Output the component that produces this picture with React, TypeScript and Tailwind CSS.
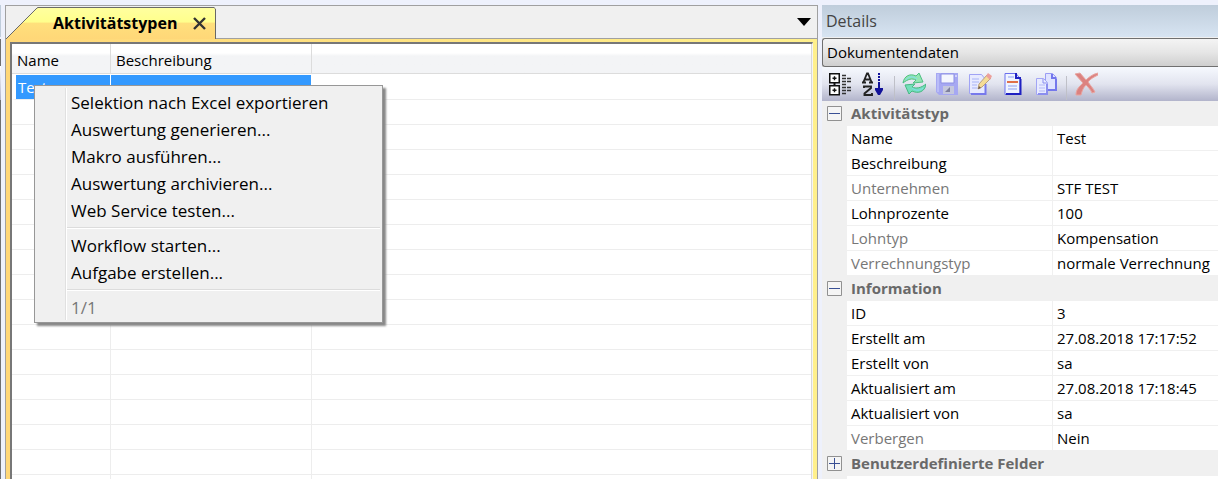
import type { ReactNode } from "react";

type Field = { label: string; value: string; muted?: boolean };
type Group = { title: string; open: boolean; fields: Field[] };

const groups: Group[] = [
  {
    title: "Aktivitätstyp",
    open: true,
    fields: [
      { label: "Name", value: "Test" },
      { label: "Beschreibung", value: "" },
      { label: "Unternehmen", value: "STF TEST", muted: true },
      { label: "Lohnprozente", value: "100" },
      { label: "Lohntyp", value: "Kompensation", muted: true },
      { label: "Verrechnungstyp", value: "normale Verrechnung", muted: true },
    ],
  },
  {
    title: "Information",
    open: true,
    fields: [
      { label: "ID", value: "3" },
      { label: "Erstellt am", value: "27.08.2018 17:17:52" },
      { label: "Erstellt von", value: "sa" },
      { label: "Aktualisiert am", value: "27.08.2018 17:18:45" },
      { label: "Aktualisiert von", value: "sa" },
      { label: "Verbergen", value: "Nein", muted: true },
    ],
  },
  { title: "Benutzerdefinierte Felder", open: false, fields: [] },
];

const menuGroups = [
  [
    "Selektion nach Excel exportieren",
    "Auswertung generieren...",
    "Makro ausführen...",
    "Auswertung archivieren...",
    "Web Service testen...",
  ],
  ["Workflow starten...", "Aufgabe erstellen..."],
];

const emptyRows = Array.from({ length: 16 }, (_, i) => i);

function Tool({ label, children }: { label: string; children: ReactNode }) {
  return (
    <button type="button" aria-label={label} className="flex h-6 w-6 items-center justify-center">
      <svg width="24" height="24" viewBox="0 0 24 24" fill="none">
        {children}
      </svg>
    </button>
  );
}

function Divider() {
  return <div className="mt-2 h-6 w-px bg-[#bfc0c8]" />;
}

function Toolbar() {
  return (
    <div className="flex h-[34px] shrink-0 items-center bg-linear-to-b from-[#f6f9fe] via-[#e2e4ef] to-[#b2b4cb] pl-[6px]">
      <div className="flex gap-[9px] pr-[9px]">
        <Tool label="Kategorisiert">
          <path d="M1.750 1.750h9.500v9h-9.500zM1.750 13.750h9.500v9h-9.500z" fill="#fff" stroke="#111" strokeWidth="1.500" />
          <path d="M6.500 11v3" stroke="#111" strokeWidth="2" />
          <path d="M4.500 6.250h4M6.500 4.250v4M4.500 18.250h4M6.500 16.250v4" stroke="#111" strokeWidth="1.400" />
          <path
            d="M14 3.500h5M14 6.500h9M14 9.500h9M14 12.500h5M14 15.500h9M14 18.500h9M14 21.500h5"
            stroke="#333"
            strokeWidth="1.300"
            strokeDasharray="4 1"
          />
        </Tool>
        <Tool label="Alphabetisch">
          <path d="M2.500 10 6 1.500h1l3.500 8.500M4 7.500h5M1 10.500h4M8 10.500h4" stroke="#222" strokeWidth="1.800" />
          <path d="M3 16v-1.500h7V16l-6.500 5.500V23H11v-2" stroke="#222" strokeWidth="1.900" />
          <path d="M18 1v2M18 4v2M18 7v2M18 10v7" stroke="#11119a" strokeWidth="2" />
          <path d="M14 16h8v2l-3 5h-2l-3-5z" fill="#11119a" />
        </Tool>
      </div>
      <Divider />
      <div className="flex gap-[9px] pr-2 pl-[7px]">
        <Tool label="Aktualisieren">
          <path d="M1 11C2 4 8 1 14 4l3-3 4 9-10 1 3-3C10 6 6 7 1 11z" fill="#92e6b2" stroke="#4fbf83" />
          <path d="M24 12c-1 8-8 10-14 7l-3 3-4-9 10-1-3 3c4 2 9 1 14-3z" fill="#74dfba" stroke="#45b982" />
          <path d="M4 8c3-4 7-4 11-1M21 16c-3 3-7 3-11 0" stroke="#7fdcf0" />
        </Tool>
        <Tool label="Speichern">
          <path d="M1 1h22v22H4l-3-3z" fill="#a6a8f2" />
          <path d="M2 2h2v18H2z" fill="#b9bcf8" />
          <path d="M6 2h13v9H6z" fill="#f4f6fe" stroke="#8d90e4" />
          <path d="M8 14h11v8H8z" fill="#c5c8dd" />
          <path d="m10 20 5-5v5z" fill="#7d7f9c" />
          <path d="M20 4h2" stroke="#fff" />
        </Tool>
        <Tool label="Bearbeiten">
          <path d="M1.500 2.500h12l4 5v14h-16z" fill="#e7eaff" stroke="#a0a3f5" />
          <path d="M17.500 12v10H3" stroke="#7779ec" strokeWidth="2" />
          <path d="M4 7h7M4 10h7M4 13h5M4 16h5" stroke="#a9b4f5" />
          <path d="m10 17 1-5 8-9 4 3-9 9z" fill="#f5dc96" stroke="#b9a080" />
          <path d="m18 4 2-3 4 3-2 4z" fill="#eda09c" />
          <path d="m10 17 3-1-2-2z" fill="#6b5849" />
        </Tool>
        <Tool label="Dokument">
          <path d="M4 1.500h11l4 5v16H4z" fill="#f0f4ff" stroke="#6b70ee" />
          <path d="M15 1v5h5M19.500 7v15H5" stroke="#2021c2" strokeWidth="2" />
          <path d="M7 5h6M7 14h9M7 17h9" stroke="#8da0f2" />
          <path d="M6 10h11" stroke="#e0704a" strokeWidth="2" />
        </Tool>
        <Tool label="Kopieren">
          <path d="M11.500 1.500h7l4 4v12h-11z" fill="#dfe3ff" stroke="#9a9cf4" />
          <path d="M18 2v4h4M22 7v11h-9" stroke="#7477ec" strokeWidth="2" />
          <path d="M2.500 6.500h7l4 4v12h-11z" fill="#e8ebff" stroke="#a2a5f5" />
          <path d="M9 7v4h4" stroke="#8b8eef" />
          <path d="M13 12v10H4" stroke="#8b8eef" strokeWidth="2" />
          <path d="M5 13h6M5 16h6M5 19h6" stroke="#b3b8f7" />
        </Tool>
      </div>
      <Divider />
      <div className="pl-[7px]">
        <Tool label="Löschen">
          <path
            d="m1 2 5-1 6 7c3-3 7-6 12-7v2c-4 2-8 4-10 7 2 3 5 6 7 10l-3 1c-1-3-4-6-6-8-3 3-4 6-5 10H2c0-6 4-9 7-12z"
            fill="#dc8280"
            stroke="#e8a5a0"
          />
        </Tool>
      </div>
    </div>
  );
}

function ContextMenu() {
  return (
    <div
      role="menu"
      className="absolute top-[85px] left-[34px] flex w-[349px] flex-col border border-[#979797] bg-[#f0f0f0] p-[2px] text-[17px] leading-[27px] shadow-[3px_3px_2px_#888]"
    >
      <div className="ml-7 border-l border-[#e0e0e0] pt-px shadow-[inset_1px_0_#fff]">
        {menuGroups.map((items, i) => (
          <div key={i} className="mb-[3px] border-b border-white pl-px">
            <div className="border-b border-[#dcdcdc] pb-[3px]">
              {items.map((item) => (
                <button key={item} role="menuitem" type="button" className="block h-[27px] w-full pl-1 text-left whitespace-nowrap">
                  {item}
                </button>
              ))}
            </div>
          </div>
        ))}
        <div className="h-[26px] pl-[5px] text-[#777]">1/1</div>
      </div>
    </div>
  );
}

function ListPane() {
  return (
    <main className="flex min-w-0 flex-1 flex-col border border-b-0 border-[#a0a0a0] bg-[#f0f0f0]">
      <div className="flex h-[33px] shrink-0 items-stretch border-b border-[#a0a0a0]">
        <div className="relative -mb-px mt-px flex w-[210px] items-center">
          <svg className="absolute inset-0 h-full w-full" viewBox="0 0 210 33" preserveAspectRatio="none">
            <defs>
              <linearGradient id="tab" x1="0" x2="0" y1="0" y2="1">
                <stop offset="0" stopColor="#ffffa0" />
                <stop offset=".46" stopColor="#ffff8c" />
                <stop offset=".5" stopColor="#ffe07c" />
                <stop offset="1" stopColor="#ffd778" />
              </linearGradient>
            </defs>
            <path d="M0 33 31 1 32 .5H208l1.500 1.500V33" fill="url(#tab)" stroke="#666" />
          </svg>
          <span className="relative pl-[47px] text-base font-bold">Aktivitätstypen</span>
          <button type="button" aria-label="Schließen" className="relative mr-2 ml-auto">
            <svg width="16" height="16" viewBox="0 0 16 16">
              <path d="m2 3 11 11M13 3 2 14" stroke="#333" strokeWidth="2.400" />
            </svg>
          </button>
        </div>
        <button type="button" aria-label="Fensterliste" className="mr-[5px] ml-auto flex items-center">
          <svg width="16" height="8" viewBox="0 0 16 8">
            <path d="M1 0h14L8 8z" fill="#000" />
          </svg>
        </button>
      </div>
      <div className="flex min-h-0 flex-1 bg-linear-to-r from-[#ffd778] to-[#fff08c] pt-[3px] pr-1 pl-1">
        <div className="min-w-0 flex-1 overflow-hidden border-t-2 border-r border-l-2 border-[#777] border-r-[#f4f4f4] bg-white">
          <table className="w-full table-fixed border-separate border-spacing-0 border-r border-[#d8d8d8] text-[15px]">
            <colgroup>
              <col className="w-[99px]" />
              <col className="w-[201px]" />
              <col />
            </colgroup>
            <thead>
              <tr className="h-[30px] bg-linear-to-b from-white from-30% to-[#f3f4f6] to-40% text-left">
                <th className="border-r border-b border-[#dcdcdc] p-0 pt-[3px] pl-[5px] font-normal">Name</th>
                <th className="border-r border-b border-[#dcdcdc] p-0 pt-[3px] pl-[5px] font-normal">Beschreibung</th>
                <th className="border-b border-[#dcdcdc] p-0" />
              </tr>
            </thead>
            <tbody>
              <tr className="h-[26px]">
                <td className="border-y border-r border-l-4 border-white border-b-[#ededed] bg-[#3399ff] bg-clip-padding p-0 pt-px pl-[2px] text-white">
                  Test
                </td>
                <td className="border-y border-r border-white border-b-[#ededed] bg-[#3399ff] bg-clip-padding p-0" />
                <td className="border-b border-[#ededed] p-0" />
              </tr>
              {emptyRows.map((row) => (
                <tr key={row} className="h-[25px]">
                  <td className="border-r border-b border-[#ededed] p-0" />
                  <td className="border-r border-b border-[#ededed] p-0" />
                  <td className="border-b border-[#ededed] p-0" />
                </tr>
              ))}
            </tbody>
          </table>
        </div>
      </div>
    </main>
  );
}

function DetailsPane() {
  return (
    <aside className="flex w-[396px] shrink-0 flex-col bg-[#f0f0f0]">
      <h2 className="flex h-8 shrink-0 items-center bg-linear-to-b from-[#bfcddb] to-[#d7e4f2] pl-1 text-base text-[#444]">Details</h2>
      <button
        type="button"
        className="mt-px flex h-[29px] shrink-0 items-center rounded-l-[3px] border border-r-0 border-[#707070] bg-linear-to-b from-[#f4f4f4] from-0% via-[#e6e6e6] via-49% to-[#cfcfcf] to-100% pl-1 text-[15px]"
      >
        Dokumentendaten
      </button>
      <Toolbar />
      <div className="min-h-0 flex-1 overflow-hidden text-[15px] leading-6">
        {groups.map((group) => (
          <section key={group.title}>
            <h3 className="flex h-[25px] items-center pb-px pl-[5px] font-bold text-[#696969]">
              <button type="button" aria-expanded={group.open} aria-label={group.title} className="mr-[9px]">
                <svg width="15" height="15" viewBox="0 0 15 15">
                  <path d="M.500 .500h14v14H.500z" fill="#f5f5f5" stroke="#919191" />
                  <path d={group.open ? "M2 7.500h11" : "M2 7.500h11M7.500 2v11"} stroke="#3a5095" />
                </svg>
              </button>
              {group.title}
            </h3>
            <dl className="pl-[25px]">
              {group.fields.map((field) => (
                <div key={field.label} className="flex h-[25px] border-b border-[#f0f0f0] bg-white">
                  <dt
                    className={
                      field.muted
                        ? "w-[206px] shrink-0 border-r border-[#f0f0f0] pl-1 text-[#777]"
                        : "w-[206px] shrink-0 border-r border-[#f0f0f0] pl-1"
                    }
                  >
                    {field.label}
                  </dt>
                  <dd className="pl-1 whitespace-nowrap">{field.value}</dd>
                </div>
              ))}
            </dl>
          </section>
        ))}
        <div className="ml-[25px] h-[25px] bg-white" />
      </div>
    </aside>
  );
}

export default function App() {
  return (
    <div className="relative flex h-screen overflow-hidden bg-[#eef1fc] pt-[5px] font-['Open_Sans','Noto_Sans',sans-serif] text-black">
      <div className="mr-1 flex w-px shrink-0 flex-col">
        <div className="h-8 bg-[#bfcddb]" />
        <div className="mt-[2px] h-[27px] bg-[#707070]" />
        <div className="h-[34px] bg-linear-to-b from-white to-[#b2b4cb]" />
        <div className="flex-1 bg-[#707070]" />
      </div>
      <ListPane />
      <div className="w-1 shrink-0" />
      <DetailsPane />
      <ContextMenu />
    </div>
  );
}
